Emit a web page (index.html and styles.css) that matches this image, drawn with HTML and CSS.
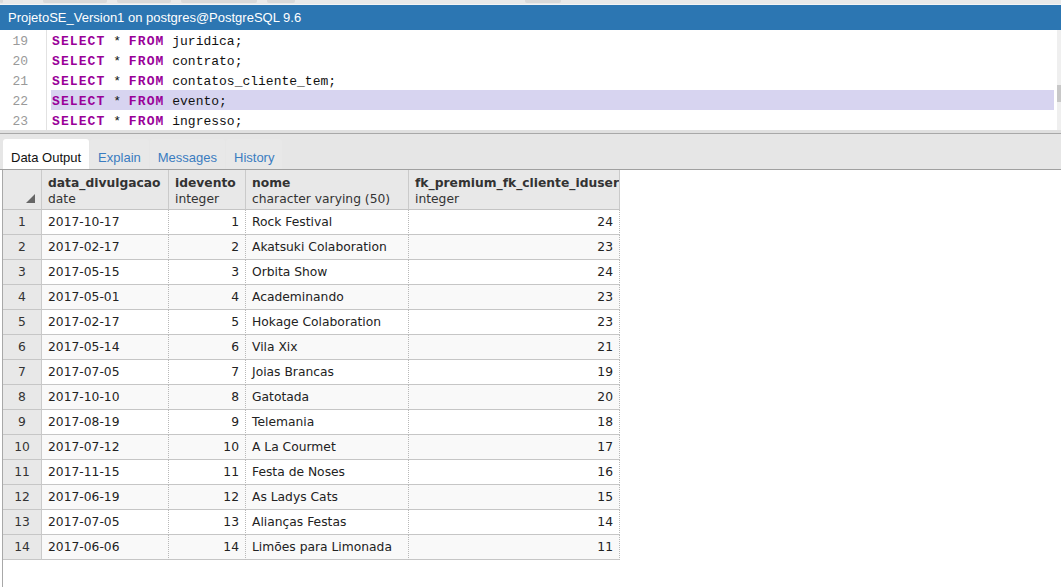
FILE: index.html
```html
<!DOCTYPE html>
<html>
<head>
<meta charset="utf-8">
<link rel="stylesheet" href="styles.css">
</head>
<body>
<div class="app">
  <div class="topstrip">
    <span class="tb tb1"></span><span class="tb tb2"></span><span class="tb tb3"></span><span class="tb tb4"></span><span class="tb tb5"></span><span class="tb tb6"></span>
  </div>
  <div class="titlebar">ProjetoSE_Version1 on postgres@PostgreSQL 9.6</div>
  <div class="editor">
    <div class="gutter">
      <div class="ln">19</div>
      <div class="ln">20</div>
      <div class="ln">21</div>
      <div class="ln">22</div>
      <div class="ln">23</div>
    </div>
    <div class="code">
      <div class="line"><span class="kw">SELECT</span> * <span class="kw">FROM</span> juridica;</div>
      <div class="line"><span class="kw">SELECT</span> * <span class="kw">FROM</span> contrato;</div>
      <div class="line"><span class="kw">SELECT</span> * <span class="kw">FROM</span> contatos_cliente_tem;</div>
      <div class="line active"><span class="kw">SELECT</span> * <span class="kw">FROM</span> evento;</div>
      <div class="line"><span class="kw">SELECT</span> * <span class="kw">FROM</span> ingresso;</div>
    </div>
    <div class="vscroll"><div class="thumb"></div></div>
  </div>
  <div class="splitter"></div>
  <div class="tabbar">
    <div class="tab current">Data Output</div>
    <div class="tab">Explain</div>
    <div class="tab">Messages</div>
    <div class="tab">History</div>
  </div>
  <div class="gridpanel">
    <table class="grid">
      <thead>
        <tr>
          <th class="c0 rn"><div class="corner"><svg width="9" height="9" viewBox="0 0 9 9"><polygon points="9,0 9,9 0,9" fill="#666"/></svg></div></th>
          <th class="c1"><div class="hn">data_divulgacao</div><div class="ht">date</div></th>
          <th class="c2"><div class="hn">idevento</div><div class="ht">integer</div></th>
          <th class="c3"><div class="hn">nome</div><div class="ht">character varying (50)</div></th>
          <th class="c4"><div class="hn">fk_premium_fk_cliente_iduser</div><div class="ht">integer</div></th>
        </tr>
      </thead>
      <tbody>
        <tr><td class="rn">1</td><td>2017-10-17</td><td class="num">1</td><td>Rock Festival</td><td class="num">24</td></tr>
        <tr><td class="rn">2</td><td>2017-02-17</td><td class="num">2</td><td>Akatsuki Colaboration</td><td class="num">23</td></tr>
        <tr><td class="rn">3</td><td>2017-05-15</td><td class="num">3</td><td>Orbita Show</td><td class="num">24</td></tr>
        <tr><td class="rn">4</td><td>2017-05-01</td><td class="num">4</td><td>Academinando</td><td class="num">23</td></tr>
        <tr><td class="rn">5</td><td>2017-02-17</td><td class="num">5</td><td>Hokage Colaboration</td><td class="num">23</td></tr>
        <tr><td class="rn">6</td><td>2017-05-14</td><td class="num">6</td><td>Vila Xix</td><td class="num">21</td></tr>
        <tr><td class="rn">7</td><td>2017-07-05</td><td class="num">7</td><td>Joias Brancas</td><td class="num">19</td></tr>
        <tr><td class="rn">8</td><td>2017-10-10</td><td class="num">8</td><td>Gatotada</td><td class="num">20</td></tr>
        <tr><td class="rn">9</td><td>2017-08-19</td><td class="num">9</td><td>Telemania</td><td class="num">18</td></tr>
        <tr><td class="rn">10</td><td>2017-07-12</td><td class="num">10</td><td>A La Courmet</td><td class="num">17</td></tr>
        <tr><td class="rn">11</td><td>2017-11-15</td><td class="num">11</td><td>Festa de Noses</td><td class="num">16</td></tr>
        <tr><td class="rn">12</td><td>2017-06-19</td><td class="num">12</td><td>As Ladys Cats</td><td class="num">15</td></tr>
        <tr><td class="rn">13</td><td>2017-07-05</td><td class="num">13</td><td>Alianças Festas</td><td class="num">14</td></tr>
        <tr><td class="rn">14</td><td>2017-06-06</td><td class="num">14</td><td>Limões para Limonada</td><td class="num">11</td></tr>
      </tbody>
    </table>
  </div>
</div>
</body>
</html>
```

FILE: styles.css
```css
* { box-sizing: border-box; }
html, body { margin: 0; padding: 0; background: #fff; }
body { width: 1061px; height: 587px; overflow: hidden; }
.app { display: flex; flex-direction: column; height: 587px; }

.topstrip {
  height: 5px;
  background: #e9e9e9;
  border-bottom: 1px solid #f4f4f4;
  display: flex;
  align-items: flex-start;
}
.tb { display: block; height: 3px; background: #d9d9d9; margin-right: 10px; border-radius: 0 0 2px 2px; }
.tb1 { width: 3px; margin-left: 0; }
.tb2 { width: 64px; margin-left: 30px; }
.tb3 { width: 54px; }
.tb4 { width: 76px; }
.tb5 { width: 28px; }
.tb6 { width: 36px; margin-left: 220px; }

.titlebar {
  height: 25px;
  background: #2c76b2;
  color: #fff;
  font-family: "Liberation Sans", Arial, sans-serif;
  font-size: 13px;
  line-height: 25px;
  padding-left: 8px;
  white-space: nowrap;
}

.editor {
  height: 100px;
  display: flex;
  background: #fff;
  overflow: hidden;
}
.gutter {
  width: 47px;
  border-right: 1px solid #e2e2e2;
  background: #fff;
  padding-right: 18px;
}
.ln {
  height: 20px;
  line-height: 20px;
  padding-top: 2px;
  text-align: right;
  color: #9a9a9a;
  font-family: "Liberation Mono", "Courier New", monospace;
  font-size: 13px;
}
.code {
  flex: 1;
  padding-left: 4px;
  padding-right: 3px;
}
.line {
  height: 20px;
  line-height: 19px;
  padding-top: 2px;
  font-family: "Liberation Mono", "Courier New", monospace;
  font-size: 13px;
  color: #111;
  white-space: pre;
  padding-left: 1px;
}
.line.active { background: #d7d4f0; }
.kw { color: #990099; font-weight: bold; letter-spacing: 1.1px; }
.vscroll {
  width: 4px;
  background: #efefef;
  padding-top: 55px;
}
.thumb { height: 17px; background: #c8c8c8; }

.splitter {
  height: 4px;
  background: #e0e0e0;
  border-bottom: 1px solid #a8a8a8;
}

.tabbar {
  height: 36px;
  background: #e6e6e6;
  border-bottom: 1px solid #a0a0a0;
  display: flex;
  align-items: flex-end;
  gap: 1px;
  padding-left: 3px;
}
.tab {
  height: 30px;
  padding: 11px 8px 0 8px;
  line-height: 16px;
  font-family: "Liberation Sans", Arial, sans-serif;
  font-size: 13px;
  color: #3a7cc0;
  background: #e8e8e8;
  border-radius: 3px 3px 0 0;
  white-space: nowrap;
}
.tab.current { background: #fff; color: #111; }

.gridpanel {
  flex: 1;
  margin-left: 2px;
  border-left: 1px solid #a8a8a8;
  background: #fff;
}

.grid {
  border-collapse: separate;
  border-spacing: 0;
  table-layout: fixed;
  width: 617px;
  font-family: "DejaVu Sans", Verdana, sans-serif;
  font-size: 12.3px;
  color: #222;
}
.grid th, .grid td { padding: 0 6px; white-space: nowrap; overflow: hidden; }
.grid th {
  height: 40px;
  background: #e8e8e8;
  border-right: 1px solid #cacaca;
  border-bottom: 1px solid #c4c4c4;
  text-align: left;
  vertical-align: top;
  padding-top: 6px;
  font-weight: normal;
  color: #333;
}
.grid th.c0 { width: 39px; padding: 0; }
.grid th.c1 { width: 127px; }
.grid th.c2 { width: 77px; }
.grid th.c3 { width: 163px; }
.grid th.c4 { width: 211px; }
.hn { font-weight: bold; line-height: 15px; }
.ht { line-height: 16px; }
.corner {
  height: 39px;
  display: flex;
  align-items: flex-end;
  justify-content: flex-end;
  padding: 0 6px 6px 0;
}

.grid td {
  height: 25px;
  line-height: 23px;
  padding-top: 1px;
  border-right: 1px dotted #b8b8b8;
  border-bottom: 1px solid #c6c6c6;
}
.grid tbody tr:nth-child(even) td { background: #f9f9f9; }
.grid td.num { text-align: right; }
.grid td.rn, .grid tbody tr:nth-child(even) td.rn {
  background: #e8e8e8;
  text-align: center;
  border-right: 1px solid #cacaca;
  color: #333;
  padding: 1px 0 0 0;
}
```
